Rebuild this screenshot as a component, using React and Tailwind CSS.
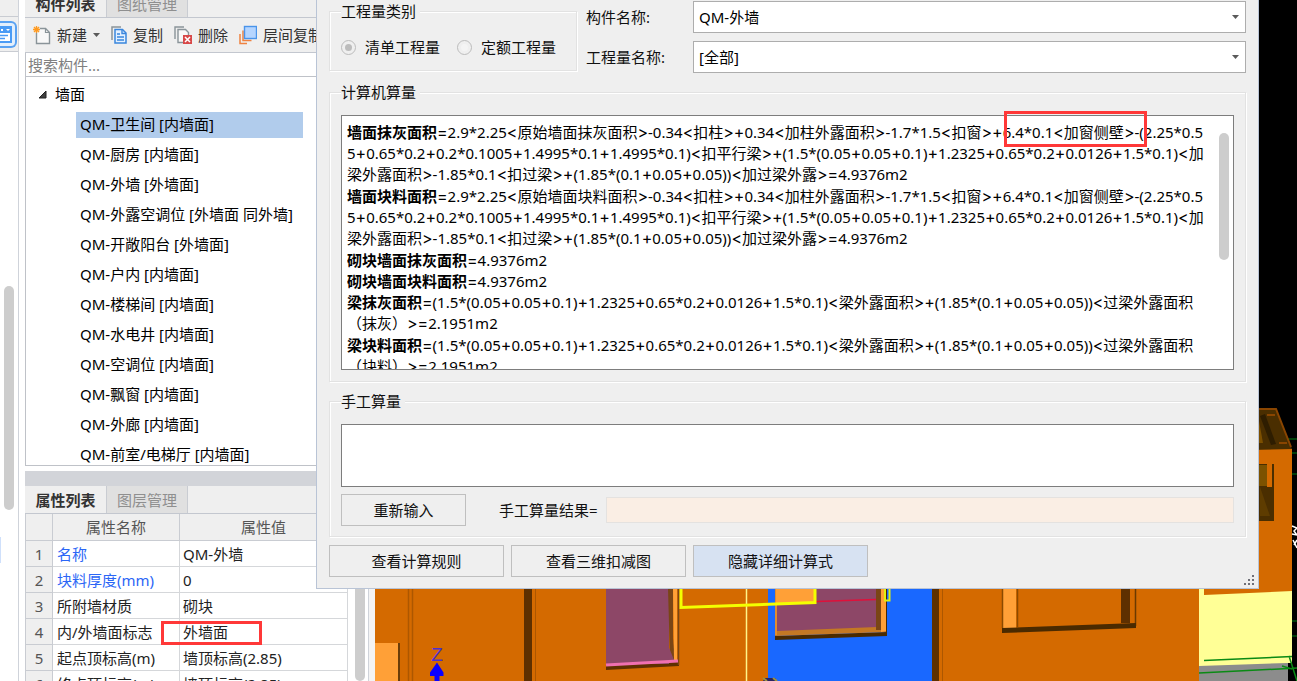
import React from "react";

const components = [
  "QM-卫生间 [内墙面]",
  "QM-厨房 [内墙面]",
  "QM-外墙 [外墙面]",
  "QM-外露空调位 [外墙面 同外墙]",
  "QM-开敞阳台 [外墙面]",
  "QM-户内 [内墙面]",
  "QM-楼梯间 [内墙面]",
  "QM-水电井 [内墙面]",
  "QM-空调位 [内墙面]",
  "QM-飘窗 [内墙面]",
  "QM-外廊 [内墙面]",
  "QM-前室/电梯厅 [内墙面]",
];

const properties = [
  { name: "名称", value: "QM-外墙", required: true },
  { name: "块料厚度(mm)", value: "0", required: true },
  { name: "所附墙材质", value: "砌块" },
  { name: "内/外墙面标志", value: "外墙面" },
  { name: "起点顶标高(m)", value: "墙顶标高(2.85)" },
  { name: "终点顶标高(m)", value: "墙顶标高(2.85)" },
];

const formulas = [
  {
    title: "墙面抹灰面积",
    lines: [
      "=2.9*2.25<原始墙面抹灰面积>-0.34<扣柱>+0.34<加柱外露面积>-1.7*1.5<扣窗>+6.4*0.1<加窗侧壁>-(2.25*0.5",
      "5+0.65*0.2+0.2*0.1005+1.4995*0.1+1.4995*0.1)<扣平行梁>+(1.5*(0.05+0.05+0.1)+1.2325+0.65*0.2+0.0126+1.5*0.1)<加",
      "梁外露面积>-1.85*0.1<扣过梁>+(1.85*(0.1+0.05+0.05))<加过梁外露>=4.9376m2",
    ],
  },
  {
    title: "墙面块料面积",
    lines: [
      "=2.9*2.25<原始墙面块料面积>-0.34<扣柱>+0.34<加柱外露面积>-1.7*1.5<扣窗>+6.4*0.1<加窗侧壁>-(2.25*0.5",
      "5+0.65*0.2+0.2*0.1005+1.4995*0.1+1.4995*0.1)<扣平行梁>+(1.5*(0.05+0.05+0.1)+1.2325+0.65*0.2+0.0126+1.5*0.1)<加",
      "梁外露面积>-1.85*0.1<扣过梁>+(1.85*(0.1+0.05+0.05))<加过梁外露>=4.9376m2",
    ],
  },
  { title: "砌块墙面抹灰面积", lines: ["=4.9376m2"] },
  { title: "砌块墙面块料面积", lines: ["=4.9376m2"] },
  {
    title: "梁抹灰面积",
    lines: [
      "=(1.5*(0.05+0.05+0.1)+1.2325+0.65*0.2+0.0126+1.5*0.1)<梁外露面积>+(1.85*(0.1+0.05+0.05))<过梁外露面积",
      "（抹灰）>=2.1951m2",
    ],
  },
  {
    title: "梁块料面积",
    lines: [
      "=(1.5*(0.05+0.05+0.1)+1.2325+0.65*0.2+0.0126+1.5*0.1)<梁外露面积>+(1.85*(0.1+0.05+0.05))<过梁外露面积",
      "（块料）>=2.1951m2",
    ],
  },
];

const NewIcon = () => (
  <svg width="18" height="20" viewBox="0 0 18 20" className="shrink-0">
    <path d="M3.5 3.5h9l4 4v11h-13z" fill="#f8f8f8" stroke="#8a9499" strokeWidth="1.4" />
    <path d="M12.5 3.5v4h4" fill="none" stroke="#8a9499" strokeWidth="1.2" />
    <circle cx="3.5" cy="4.5" r="3.6" fill="#efefef" />
    <path d="M3.5 1v7M0 4.5h7M1 2l5 5M6 2l-5 5" stroke="#ff9a1f" strokeWidth="1.3" />
  </svg>
);

const CopyIcon = () => (
  <svg width="16" height="20" viewBox="0 0 16 20" className="shrink-0">
    <path d="M1 15V2h9" fill="none" stroke="#8a9499" strokeWidth="1.5" />
    <path d="M4 4.5h7.5l3.5 3.5v10H4z" fill="#e3f0ff" stroke="#3a86dd" strokeWidth="1.5" />
    <path d="M11 4.5V8.5h4M6 9h3M6 12h7M6 15h7" fill="none" stroke="#3a86dd" strokeWidth="1.4" />
  </svg>
);

const DeleteIcon = () => (
  <svg width="18" height="20" viewBox="0 0 18 20" className="shrink-0">
    <path d="M1 14V2h9" fill="none" stroke="#8a9499" strokeWidth="1.4" />
    <path d="M9 17.5H4V4.5h7.5l3 3V10" fill="#f8f8f8" stroke="#8a9499" strokeWidth="1.4" />
    <rect x="9" y="10" width="9" height="9" fill="#d84848" />
    <path d="M11 12l5 5M16 12l-5 5" stroke="#fff" strokeWidth="1.5" />
  </svg>
);

const LayerCopyIcon = () => (
  <svg width="18" height="20" viewBox="0 0 18 20" className="shrink-0">
    <path d="M1 9v9.5h7" fill="none" stroke="#ef8240" strokeWidth="1.5" />
    <path d="M4 5.5v10h8.5" fill="none" stroke="#ef8240" strokeWidth="1.5" />
    <rect x="5.5" y="1.5" width="12" height="12" fill="#b5d5ff" stroke="#4a94ea" strokeWidth="1.4" />
  </svg>
);

const Caret = () => (
  <svg width="7" height="4" viewBox="0 0 7 4" className="shrink-0">
    <path d="M0 0h7L3.5 4z" fill="#5a5a5a" />
  </svg>
);

const ToolButton = ({ icon, label, dropdown }) => (
  <button type="button" className="flex shrink-0 items-center gap-[6px] whitespace-nowrap text-[#333]">
    {icon}
    <span>{label}</span>
    {dropdown && <Caret />}
  </button>
);

const Tabs = ({ active, other, className = "" }) => (
  <div role="tablist" className={`flex h-[28px] shrink-0 border-b border-[#c3c7cf] bg-[#efefef] ${className}`}>
    <button type="button" role="tab" aria-selected="true" className="w-[81px] font-bold text-[#333]">
      {active}
    </button>
    <button
      type="button"
      role="tab"
      aria-selected="false"
      className="w-[82px] border-x border-[#c9ccd2] bg-[#e0e0e0] text-[#8f8f8f]"
    >
      {other}
    </button>
  </div>
);

const SideStrip = () => (
  <div className="flex w-[19px] shrink-0 flex-col border-r border-[#cfd3da] bg-white">
    <div className="h-[17px] shrink-0 border-b border-[#c9ccd2] bg-[#efefef]" />
    <div className="flex h-[35px] shrink-0 items-center border-b border-[#c9ccd2] bg-[#efefef]">
      <button
        type="button"
        aria-label="导航"
        className="flex h-[27px] w-[17px] items-center rounded-r-md border-2 border-l-0 border-[#5aa2f2] bg-[#e3effc]"
      >
        <svg width="13" height="17" viewBox="0 0 13 17">
          <path d="M0 1h11v15H0" fill="#fff" stroke="#4a9bf5" strokeWidth="2" />
          <path d="M0 1h12v6H0z" fill="#4a9bf5" />
          <path d="M1 3h2v2H1zM6 3h4L8 5z" fill="#fff" />
          <path d="M0 9.5h8M0 12.5h5" stroke="#4a9bf5" strokeWidth="1.5" />
        </svg>
      </button>
    </div>
    <div className="flex flex-1 flex-col items-center pt-[234px]">
      <div className="h-[224px] w-[10px] rounded-full bg-[#cdcdcd]" />
      <div className="mt-[27px] h-[26px] w-px self-start bg-[#cfe0fb]" />
    </div>
  </div>
);

const ComponentTree = () => (
  <div className="h-[389px] shrink-0 overflow-hidden border-b border-l border-[#bfc2c8] bg-white pt-[5px] text-black">
    <div className="flex h-[26px] items-center gap-[8px] pb-[2px] pl-[12px]">
      <svg width="9" height="9" viewBox="0 0 9 9">
        <path d="M8 1v7H1z" fill="#404040" stroke="#222" />
      </svg>
      墙面
    </div>
    <ul className="mt-[4px] flex flex-col gap-[4px] pl-[50px]">
      {components.map((item, index) => (
        <li
          key={item}
          className={`flex h-[26px] w-[227px] shrink-0 items-center whitespace-nowrap pb-[2px] pl-[4px] ${
            index === 0 ? "bg-[#b1ccec]" : ""
          }`}
        >
          {item}
        </li>
      ))}
    </ul>
  </div>
);

const PropertyTable = () => (
  <div className="flex min-h-0 flex-1 overflow-hidden bg-white">
    <table className="h-px w-[323px] table-fixed border-separate border-spacing-0 border-l border-[#c9ccd2] leading-[20px]">
      <colgroup>
        <col className="w-[27px]" />
        <col className="w-[127px]" />
        <col className="w-[168px]" />
      </colgroup>
      <thead>
        <tr className="h-[27px] bg-[#efefef] text-[#555]">
          <th className="border-b border-r border-[#c9ccd2]" />
          <th className="border-b border-r border-[#c9ccd2] font-normal">属性名称</th>
          <th className="border-b border-r border-[#c9ccd2] font-normal">属性值</th>
        </tr>
      </thead>
      <tbody>
        {properties.map((row, index) => (
          <tr key={row.name} className="h-[26px]">
            <td className="border-b border-r border-[#c9ccd2] bg-[#efefef] text-center text-[#555]">{index + 1}</td>
            <td
              className={`whitespace-nowrap border-b border-r border-[#d5d7da] pl-[4px] ${
                row.required ? "text-[#2b66f6]" : "text-[#222]"
              }`}
            >
              {row.name}
            </td>
            <td className="whitespace-nowrap border-b border-r border-[#d5d7da] pl-[3px] text-[#222]">{row.value}</td>
          </tr>
        ))}
      </tbody>
    </table>
    <div className="ml-[7px] w-[10px] rounded-b-full bg-[#cdcdcd]" />
  </div>
);

const Viewport = () => (
  <div className="min-w-0 flex-1 bg-black">
    <svg className="h-full w-full" viewBox="375 0 922 681" preserveAspectRatio="xMinYMin slice">
      {/* grid lines */}
      <path d="M1286 439h11M1290 453h7M1290 474h7M1290 621h7M1290 636h7" stroke="#007c14" />
      {/* main facade */}
      <rect x="375" y="560" width="825" height="121" fill="#d46a00" />
      <rect x="375" y="643" width="24" height="38" fill="#ffa037" />
      <path d="M399 643v38" stroke="#6b3d08" strokeWidth="2" />
      <path d="M408.5 588v93M412.5 588v93" stroke="#ad5700" strokeWidth="1.5" />
      <rect x="524" y="588" width="8" height="93" fill="#5e3000" />
      <path d="M535.5 588v93" stroke="#ad5700" />
      <path d="M606 664l73-4v6l-73 4z" fill="#5e3000" />
      <rect x="606" y="588" width="63" height="76" fill="#8d4767" />
      <path d="M668 588h5v50l2 22h-5z" fill="#7a4515" />
      <path d="M668 645l6 15h-6z" fill="#8d4767" />
      <path d="M673 588h4v72h-3z" fill="#ffa037" />
      <path d="M678.5 588v77" stroke="#7a4515" strokeWidth="1.5" />
      <path d="M606 665l72-4" stroke="#f070b0" strokeWidth="3" />
      <path d="M746.5 588v93" stroke="#fff48a" strokeWidth="1.5" />
      {/* highlighted wall */}
      <rect x="768" y="588" width="165" height="93" fill="#1968ff" />
      <path d="M775 636l112-4v4l-112 4z" fill="#4a2a00" />
      <path d="M775 588h112v44l-112 4z" fill="#c47824" />
      <path d="M777 588h100v39l-100 4z" fill="#8d4767" />
      <rect x="776" y="588" width="39" height="15" fill="#ffa037" />
      <rect x="876" y="588" width="5" height="42" fill="#7a4515" />
      <path d="M881 588h5v43l-5 1z" fill="#ffa037" />
      <path d="M776 588v47" stroke="#ffa037" />
      <path d="M886.5 588v44" stroke="#4a2a00" />
      <path d="M816 601.5l60-2" stroke="#e0103a" strokeWidth="1.5" />
      <path d="M681 588v19.5l134-5V588" fill="none" stroke="#f3ff00" strokeWidth="3" />
      <path d="M885 588v12.5h4.5V588" fill="none" stroke="#e0f010" strokeWidth="2" />
      <path d="M765 678h10l2 3h-14z" fill="#2a2460" />
      <path d="M763 678l4 3M773 678l4 3" stroke="#9b9140" strokeWidth="2" />
      <rect x="932" y="588" width="7" height="93" fill="#5e3000" />
      <path d="M942.5 588v93" stroke="#ad5700" />
      {/* right window */}
      <rect x="1003" y="588" width="13" height="40" fill="#ffa037" />
      <path d="M1002.5 588v40M1017.5 588v39" stroke="#8a4a00" strokeWidth="1.5" />
      <rect x="1121" y="588" width="9" height="35" fill="#5e3000" />
      <path d="M1135.5 588v38" stroke="#6a3a00" strokeWidth="1.5" />
      <path d="M1002 628l134-5v5l-134 5z" fill="#4a2a00" />
      {/* tower */}
      <rect x="1250" y="449" width="42" height="145" fill="#d46a00" />
      <path d="M1250 408h26l16 41-42 1z" fill="#4a2e00" />
      <path d="M1259 421l4 22h-4z" fill="#7c4f00" />
      <path d="M1265 414l11 30-5 1-11-29z" fill="#2e1d00" />
      <path d="M1259 409h17l15 38M1267 415h8M1279 443h8" fill="none" stroke="#8a4500" strokeWidth="2" />
      <rect x="1259" y="464" width="15" height="57" fill="#4a2e00" />
      <rect x="1259" y="465" width="8" height="21" fill="#7c5200" />
      <rect x="1267" y="464" width="5" height="23" fill="#d46a00" />
      <path d="M1260 487v29h10z" fill="#5e3c00" />
      <rect x="1199" y="588" width="93" height="79" fill="#ffff96" />
      <path d="M1204 588h88v3l-88 4z" fill="#d46a00" />
      <path d="M1199 666l89-3v18h-89z" fill="#8c8c8c" />
      <path d="M1288 663h4v18h-4z" fill="#000" />
      <path
        d="M1204 660.5l88-4M1199 673l98-5M1282 666l10 3M1289 656l8 25"
        fill="none"
        stroke="#0a8a14"
        strokeWidth="1.5"
      />
      <path d="M1292 526l5 2-3 3 3 4-5-1M1293 540l4 8M1294 545l3-5" fill="none" stroke="#fff" strokeWidth="1.5" />
      {/* z axis */}
      <text x="437" y="661" textAnchor="middle" fontSize="19" fill="#4b2fd0" fontFamily="Liberation Sans, sans-serif">
        Z
      </text>
      <path d="M437 662.5l6.5 10v3.5h-4v5h-5v-5h-4.5v-3.5z" fill="#0a00ff" />
    </svg>
  </div>
);

const Group = ({ title, className = "", children }) => (
  <fieldset
    className={`min-w-0 border border-[#e2e2e2] px-[11px] shadow-[1px_1px_0_#fff,inset_1px_1px_0_#fff] ${className}`}
  >
    <legend className="bg-[#efefef] pr-[4px] leading-[20px]">{title}</legend>
    {children}
  </fieldset>
);

const SelectField = ({ id, label, value }) => (
  <div className="flex h-[32px] items-center">
    <label htmlFor={id} className="w-[107px] shrink-0">
      {label}
    </label>
    <div className="relative flex h-full min-w-0 flex-1 items-center">
      <select
        id={id}
        defaultValue={value}
        className="h-full w-full appearance-none border border-[#adadad] bg-white pl-[5px] pr-[24px] text-black"
      >
        <option>{value}</option>
      </select>
      <span className="pointer-events-none absolute right-[7px] flex">
        <Caret />
      </span>
    </div>
  </div>
);

const RadioOption = ({ label, checked }) => (
  <label className="flex items-center gap-[9px]">
    <input
      type="radio"
      name="quantityType"
      defaultChecked={checked}
      disabled
      className="size-[15px] appearance-none rounded-full border border-[#bcbcbc] bg-[#f4f4f4] bg-clip-content p-[3px] checked:bg-[#bcbcbc]"
    />
    {label}
  </label>
);

const PushButton = ({ children, className = "" }) => (
  <button type="button" className={`h-[32px] border border-[#bfbfbf] ${className}`}>
    {children}
  </button>
);

// operators are set in a wider face than the numbers around them
const Expression = ({ text }) =>
  text.split(/([<>=+]+)/).map((part, index) =>
    index % 2 === 1 ? (
      <span key={index} className="font-['Inter','Noto_Sans',sans-serif] text-[16px] leading-[20px]">
        {part}
      </span>
    ) : (
      part
    )
  );

const FormulaBox = () => (
  <div className="mt-[13px] flex h-[255px] overflow-hidden border border-[#7d7d7d] bg-white pl-[5px]">
    <div className="min-w-0 flex-1 overflow-hidden pt-[6px] leading-[21px] text-black">
      {formulas.map((item) => (
        <p key={item.title} className={item.lines.length > 1 ? "mb-px" : ""}>
          {item.lines.map((line, index) => (
            <span key={index} className="block h-[21px] whitespace-nowrap">
              {index === 0 && <b>{item.title}</b>}
              <Expression text={line} />
            </span>
          ))}
        </p>
      ))}
    </div>
    <div className="mr-[4px] mt-[17px] h-[127px] w-[10px] rounded-full bg-[#cdcdcd]" />
  </div>
);

const QuantityDialog = () => (
  <section
    role="dialog"
    aria-label="工程量"
    className="absolute left-[316px] right-[38px] top-0 flex flex-col border border-t-0 border-[#b9c4d6] bg-[#efefef] pl-[12px] pr-[12px] text-[#111]"
  >
    <div className="flex gap-[9px] pt-px">
      <Group title="工程量类别" className="h-[70px] w-[248px] shrink-0">
        <div className="flex gap-[17px] pt-[14px] leading-[24px]">
          <RadioOption label="清单工程量" checked />
          <RadioOption label="定额工程量" />
        </div>
      </Group>
      <div className="flex min-w-0 flex-1 flex-col gap-[8px]">
        <SelectField id="component" label="构件名称:" value="QM-外墙" />
        <SelectField id="quantity" label="工程量名称:" value="[全部]" />
      </div>
    </div>

    <Group title="计算机算量" className="mt-[9px] h-[300px]">
      <FormulaBox />
    </Group>

    <Group title="手工算量" className="mt-[9px] h-[146px]">
      <textarea
        aria-label="手工算量"
        className="mt-[13px] block h-[63px] w-full resize-none border border-[#7d7d7d] bg-white"
      />
      <div className="mt-[7px] flex items-center">
        <PushButton className="w-[125px] shrink-0">重新输入</PushButton>
        <label htmlFor="result" className="ml-[33px] w-[107px] shrink-0">
          手工算量结果=
        </label>
        <input
          id="result"
          readOnly
          className="h-[26px] min-w-0 flex-1 border border-[#e4e2e0] bg-[#faeee4]"
        />
      </div>
    </Group>

    <div className="flex gap-[7px] pb-[11px] pt-[8px]">
      <PushButton className="w-[175px]">查看计算规则</PushButton>
      <PushButton className="w-[175px]">查看三维扣减图</PushButton>
      <PushButton className="w-[175px] bg-[#d7e2f2]">隐藏详细计算式</PushButton>
    </div>

    <svg width="12" height="12" viewBox="0 0 12 12" className="absolute bottom-[2px] right-[2px]">
      <path
        d="M8 1h2v2H8zM4 5h2v2H4zM8 5h2v2H8zM0 9h2v2H0zM4 9h2v2H4zM8 9h2v2H8z"
        fill="#6f6f78"
      />
    </svg>
    <div className="pointer-events-none absolute right-[111px] top-[111px] h-[36px] w-[143px] border-3 border-[#ff3838]" />
  </section>
);

const App = () => (
  <div className="relative flex h-screen overflow-hidden bg-white font-['Noto_Sans','Noto_Sans_CJK_SC',sans-serif] text-[15px] leading-[20px]">
    <SideStrip />
    <aside className="ml-[6px] flex w-[344px] shrink-0 flex-col border-r border-[#cfd3da]">
      <Tabs active="构件列表" other="图纸管理" className="-mt-[10px]" />
      <div className="flex h-[35px] shrink-0 items-center gap-[11px] overflow-hidden border-b border-[#c3c7cf] bg-[#efefef] pl-[8px]">
        <ToolButton icon={<NewIcon />} label="新建" dropdown />
        <ToolButton icon={<CopyIcon />} label="复制" />
        <ToolButton icon={<DeleteIcon />} label="删除" />
        <ToolButton icon={<LayerCopyIcon />} label="层间复制" />
      </div>
      <input
        type="text"
        aria-label="搜索构件"
        placeholder="搜索构件..."
        className="h-[24px] shrink-0 border-b border-l border-[#bfc2c8] bg-white pl-[2px] placeholder:text-[#808080]"
      />
      <ComponentTree />
      <div className="mt-[5px] h-[15px] shrink-0 bg-[#d2d4d9]" />
      <Tabs active="属性列表" other="图层管理" />
      <PropertyTable />
    </aside>
    <div className="w-[6px] shrink-0 bg-[#f4f4f4]" />
    <Viewport />
    <QuantityDialog />
    <div className="pointer-events-none absolute left-[161px] top-[621px] h-[24px] w-[101px] border-3 border-[#ff3838]" />
  </div>
);

export default App;
